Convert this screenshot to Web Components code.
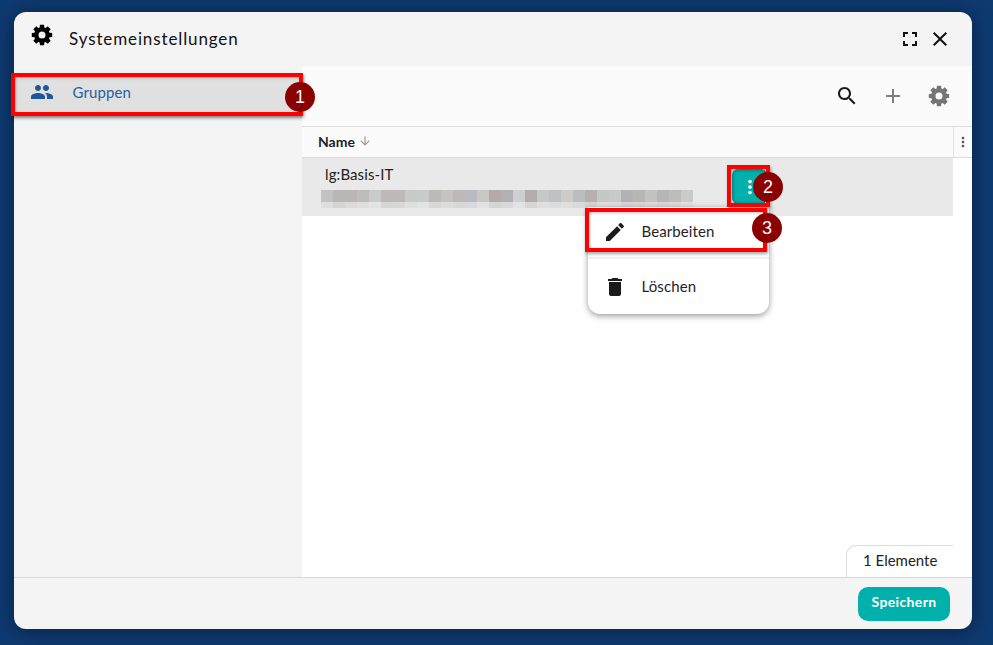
<!DOCTYPE html>
<html lang="de"><head><meta charset="utf-8"><title>Systemeinstellungen</title>
<style>
html,body{margin:0;height:100%}
body{width:993px;height:645px;overflow:hidden;background:#0e3a72;font-family:Lato,"Noto Sans",sans-serif;color:#1f2327}
</style></head><body>
<sys-dialog heading="Systemeinstellungen">
  <nav-item slot="nav" label="Gruppen"></nav-item>
  <group-table slot="main"></group-table>
</sys-dialog>
<script>
function gear(){
  const c=12,R=10.4,r=7.9,h=3.5,n=8;let d='';
  const pt=(a,rad)=>(c+rad*Math.sin(a)).toFixed(2)+' '+(c-rad*Math.cos(a)).toFixed(2);
  for(let i=0;i<n;i++){
    const a=i*2*Math.PI/n,w=.2,v=.3;
    d+=(i?'L':'M')+pt(a-v,r)+'L'+pt(a-w,R)+'L'+pt(a+w,R)+'L'+pt(a+v,r);
  }
  d+='ZM12 '+(12-h)+'a'+h+' '+h+' 0 1 0 0 '+(2*h)+'a'+h+' '+h+' 0 1 0 0 '+(-2*h)+'Z';
  return d;
}
const P={
settings:gear(),
group:'M16 11c1.66 0 2.99-1.34 2.99-3S17.66 5 16 5c-1.66 0-3 1.34-3 3s1.34 3 3 3zm-8 0c1.66 0 2.99-1.34 2.99-3S9.66 5 8 5C6.34 5 5 6.34 5 8s1.34 3 3 3zm0 2c-2.33 0-7 1.17-7 3.5V19h14v-2.5c0-2.33-4.67-3.5-7-3.5zm8 0c-.29 0-.62.02-.97.05 1.16.84 1.97 1.97 1.97 3.45V19h6v-2.5c0-2.33-4.67-3.5-7-3.5z',
search:'M15.5 14h-.79l-.28-.27C15.41 12.59 16 11.11 16 9.5 16 5.91 13.09 3 9.5 3S3 5.91 3 9.5 5.91 16 9.5 16c1.61 0 3.09-.59 4.23-1.57l.27.28v.79l5 4.99L20.49 19l-4.99-5zm-6 0C7.01 14 5 11.99 5 9.5S7.01 5 9.5 5 14 7.01 14 9.5 11.99 14 9.5 14z',
add:'M19 13h-6v6h-2v-6H5v-2h6V5h2v6h6v2z',
close:'M19 6.41L17.59 5 12 10.59 6.41 5 5 6.41 10.59 12 5 17.59 6.41 19 12 13.41 17.59 19 19 17.59 13.41 12z',
full:'M5 5h5v2H7v3H5zM14 5h5v5h-2V7h-3zM5 14h2v3h3v2H5zM17 14h2v5h-5v-2h3z',
edit:'M3 17.25V21h3.75L17.81 9.94l-3.75-3.75L3 17.25zM20.71 7.04c.39-.39.39-1.02 0-1.41l-2.34-2.34c-.39-.39-1.02-.39-1.41 0l-1.83 1.83 3.75 3.75 1.83-1.83z',
del:'M6 19c0 1.1.9 2 2 2h8c1.1 0 2-.9 2-2V7H6v12zM19 4h-3.5l-1-1h-5l-1 1H5v2h14V4z',
down:'M20 12l-1.41-1.41L13 16.17V4h-2v12.17l-5.58-5.59L4 12l8 8 8-8z',
more:'M12 8c1.1 0 2-.9 2-2s-.9-2-2-2-2 .9-2 2 .9 2 2 2zm0 2c-1.1 0-2 .9-2 2s.9 2 2 2 2-.9 2-2-.9-2-2-2zm0 6c-1.1 0-2 .9-2 2s.9 2 2 2 2-.9 2-2-.9-2-2-2z'
};
const ic=(n,s,c)=>`<svg width="${s}" height="${s}" viewBox="0 0 24 24" fill="${c}" fill-rule="evenodd" style="display:block;flex:none" aria-hidden="true"><path d="${P[n]}"/></svg>`;
class Base extends HTMLElement{
  constructor(){super();this.attachShadow({mode:'open'});}
  connectedCallback(){this.shadowRoot.innerHTML=this.render();}
}
customElements.define('sys-dialog',class extends Base{render(){return `<style>
:host{display:block;position:absolute;left:14px;top:12px;width:958px;height:617px}
.d{box-sizing:border-box;height:100%;display:flex;flex-direction:column;background:#f4f4f4;border-radius:12px;box-shadow:0 2px 22px rgba(0,0,0,.45)}
header{height:54px;flex:none;display:flex;align-items:center;padding:0 20px 0 16px}
h1{margin:0 0 2px 15px;font:400 17px Lato,sans-serif;letter-spacing:.88px;color:#111;flex:1}
.gear{position:relative;top:-4px;left:0}
.acts{display:flex;gap:6px;align-items:center}
.body{flex:1;display:flex;min-height:0}
aside{width:288px;flex:none;padding-top:8px;box-sizing:border-box}
main{flex:1;background:#fff;min-width:0;position:relative}
footer{height:52px;box-sizing:border-box;flex:none;border-top:1px solid #d8d8d8;display:flex;justify-content:flex-end;align-items:center;padding:0 22px 0 0}
button{box-sizing:border-box;width:92px;height:34px;border:0;border-radius:10px;background:#00b0aa;color:#fff;font:700 14px Lato,sans-serif;letter-spacing:.35px;padding:0 0 4px}
</style><div class="d"><header><span class="gear">${ic('settings',24,'#000')}</span><h1>${this.getAttribute('heading')}</h1>
<div class="acts">${ic('full',24,'#111')}${ic('close',24,'#111')}</div></header>
<div class="body"><aside><slot name="nav"></slot></aside><main><slot name="main"></slot></main></div>
<footer><button>Speichern</button></footer></div>`}});
customElements.define('nav-item',class extends Base{render(){return `<style>
:host{display:block;position:relative}
.i{height:41px;background:#e0e0e0;display:flex;align-items:center;padding:0 0 5px 16px;box-sizing:border-box;color:#1f5fa8;font-size:15px;box-shadow:0 2px 4px rgba(0,0,0,.25)}
span{margin-left:18.5px;letter-spacing:.1px}
</style><div class="i">${ic('group',24,'#1f5699')}<span>${this.getAttribute('label')}</span></div>
<call-out style="left:-3px;top:-1px;width:292px;height:43px"></call-out>
<num-badge n="1" style="left:271px;top:8px"></num-badge>`}});
customElements.define('call-out',class extends Base{render(){return `<style>
:host{display:block;position:absolute;box-sizing:border-box;border:4px solid #f00;pointer-events:none;z-index:3;box-shadow:1px 2px 3px rgba(0,0,0,.35),inset 1px 1px 3px rgba(0,0,0,.25)}
</style>`}});
customElements.define('num-badge',class extends Base{render(){return `<style>
:host{display:flex;position:absolute;width:30px;height:30px;border-radius:50%;background:#8b0000;color:#fff;font:400 18px "Liberation Sans",Arial,sans-serif;align-items:center;justify-content:center;z-index:4}
</style>${this.getAttribute('n')}`}});
customElements.define('blur-line',class extends Base{render(){
const top=['#c2c2c2','#b9b6b4','#b9b6b4','#bdbdbb','#c8cacc','#bcb9b7','#bcb9b7','#c8caca','#c9caca','#bdbab6','#c5c3c0','#bcb9b8','#b8bbc2','#c7c7c4','#b2abaa','#b0b0b5','#cdcfd2','#b3aeac','#c6c8c8','#bfc1c2','#cdcbc5','#b9bdc0','#b8b0ae','#c3c8c3','#c8c9cb','#b2b2b4','#b8b5b3','#c2c2c1','#b6b6b9','#bfbcb9','#c9cacc'];
const bot=['#dedede','#d6d4d2','#dbdad9','#dedede','#e2e3e3','#d7d6d4','#d8d8d6','#dedfdf','#e3e3e3','#d8d7d5','#dddcda','#d9d8d8','#d9dade','#e2e2e2','#d6d3d3','#d8d8da','#e2e3e4','#d7d5d4','#dfdfdf','#dbdcdc','#e0dfdc','#d8dadc','#d8d4d3','#dde0dd','#dfdfe0','#d6d6d7','#d9d8d7','#dcdcdb','#d8d8d9','#dbdad8','#e1e1e2'];
return `<style>
:host{display:block;width:372px}
.r{display:grid;grid-template-columns:repeat(31,12px)}
.a{height:12px}.b{height:6px}
</style><div class="r">${top.map(c=>`<div class="a" style="background:${c}"></div>`).join('')}${bot.map(c=>`<div class="b" style="background:${c}"></div>`).join('')}</div>`}});
customElements.define('row-menu',class extends Base{render(){return `<style>
:host{display:block;position:absolute;left:286px;top:141px;width:181px;z-index:2}
.m{background:#fff;border-radius:0 0 12px 12px;box-shadow:0 2px 6px rgba(0,0,0,.4);height:107px;display:flex;flex-direction:column}
.o{display:flex;align-items:center;padding-left:15px;font-size:15px;color:#1f2327;box-sizing:border-box}
.o span{margin:0 0 2px 14.5px;letter-spacing:.1px}
.e{height:52px;border-bottom:2px solid #f0f0f0}
.l{flex:1}
</style><div class="m"><div class="o e">${ic('edit',24,'#1b1b1b')}<span>Bearbeiten</span></div><div class="o l">${ic('del',24,'#1b1b1b')}<span>Löschen</span></div></div>`}});
customElements.define('group-table',class extends Base{render(){return `<style>
:host{display:block;height:100%;position:relative;font-size:15px}
.tb{height:61px;box-sizing:border-box;background:#fbfbfb;border-bottom:1px solid #dcdcdc;display:flex;justify-content:flex-end;align-items:center;gap:22px;padding:0 21px 0 0}
.th{height:31px;box-sizing:border-box;background:#fbfbfb;border-bottom:1px solid #dcdcdc;display:flex;align-items:center;padding-left:16px;font-weight:700;font-size:14px;color:#1f2327}
.th b{flex:1;display:flex;align-items:center;gap:3px;font-weight:700;height:100%;box-sizing:border-box;padding-bottom:2px}
.k{width:19px;height:100%;border-left:1px solid #e4e4e4;display:flex;align-items:center;justify-content:center;box-sizing:border-box;padding-bottom:1px}
.row{height:58px;width:651px;background:#e9e9e9;box-sizing:border-box;padding:6px 0 0 19px;position:relative}
.t{font-size:15px;line-height:20px;color:#222;margin-left:4px;letter-spacing:.1px}
blur-line{margin-top:6px}
.btn{position:absolute;left:430px;top:11px;width:35px;height:35px;border-radius:6px;background:#00b0aa;display:flex;align-items:center;justify-content:center;box-shadow:inset 0 0 4px rgba(0,0,0,.3)}
.chip{position:absolute;right:19px;bottom:0;width:107px;height:32px;box-sizing:border-box;background:#fff;border:1px solid #ddd;border-width:1px 0 0 1px;border-radius:10px 0 0 0;display:flex;align-items:center;padding:0 0 3px 16px;font-size:15px;color:#222}
</style>
<div class="tb">${ic('search',24,'#1a1a1a')}${ic('add',24,'#7d7d7d')}${ic('settings',24,'#757575')}</div>
<div class="th"><b>Name ${ic('down',14,'#9a9a9a')}</b><span class="k">${ic('more',16,'#555')}</span></div>
<div class="row"><div class="t">lg:Basis-IT</div><blur-line></blur-line>
<div class="btn">${ic('more',22,'#fff')}</div></div>
<call-out style="left:425px;top:99px;width:43px;height:42px"></call-out>
<num-badge n="2" style="left:451px;top:106px"></num-badge>
<row-menu></row-menu>
<call-out style="left:283px;top:142px;width:182px;height:44px"></call-out>
<num-badge n="3" style="left:450px;top:147px"></num-badge>
<div class="chip">1 Elemente</div>`}});
</script></body></html>
